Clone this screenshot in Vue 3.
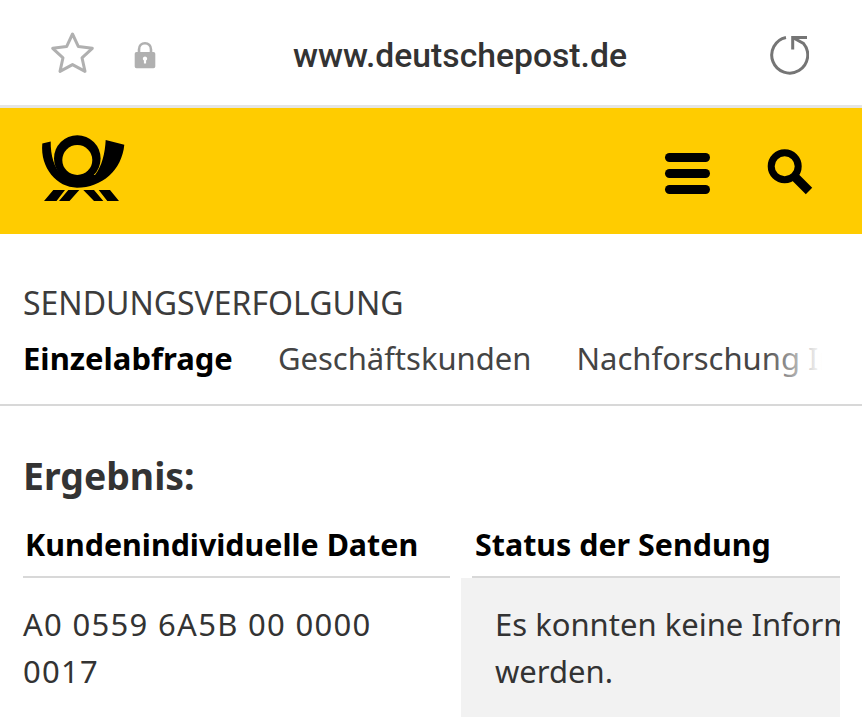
<script setup>
const tabs = ['Einzelabfrage', 'Geschäftskunden', 'Nachforschung Int']
</script>

<template>
  <div class="page">
    <div class="browser-bar">
      <svg class="star" width="48" height="48" viewBox="0 0 48 48">
        <path d="M23.5 5 L29.4 17.6 L43.3 19.3 L33 28.8 L36 42.4 L23.5 35.6 L11 42.4 L14 28.8 L3.7 19.3 L17.6 17.6 Z" fill="none" stroke="#b0b0b0" stroke-width="3" stroke-linejoin="round" />
      </svg>
      <svg class="lock" width="22" height="28" viewBox="0 0 22 28">
        <path d="M5 12 V8.5 C5 4.8 7.6 2.2 11 2.2 C14.4 2.2 17 4.8 17 8.5 V12" fill="none" stroke="#b0b0b0" stroke-width="2.6" />
        <path fill-rule="evenodd" d="M2.5 11 H19.5 A1.8 1.8 0 0 1 21.3 12.8 V25.5 A1.8 1.8 0 0 1 19.5 27.3 H2.5 A1.8 1.8 0 0 1 0.7 25.5 V12.8 A1.8 1.8 0 0 1 2.5 11 Z M11 15.4 A2.2 2.2 0 0 0 9.9 19.5 V22.6 H12.1 V19.5 A2.2 2.2 0 0 0 11 15.4 Z" fill="#b0b0b0" />
      </svg>
      <div class="url">www.deutschepost.de</div>
      <svg class="reload" width="44" height="44" viewBox="0 0 44 44">
        <path d="M21 6.5 A18 18 0 1 0 38.5 12.5 L27.7 6.5" fill="none" stroke="#757575" stroke-width="3" />
        <path d="M42 6.5 H27.7 V18.5" fill="none" stroke="#757575" stroke-width="3" />
      </svg>
    </div>

    <header class="site-header">
      <svg class="logo" width="90" height="70" viewBox="40 133 90 70">
        <path d="M42.3 143.6 L50.7 141.4 C50.5 155 54 168 62 175 L95 175 C102 166 105 153 105.7 140 L124.3 144.7 C122 170 102 187.7 77 187.7 C57 187.7 40 168 42.3 143.6 Z" fill="#000" />
        <circle cx="77.3" cy="158.5" r="23.3" fill="#000" />
        <circle cx="77.3" cy="160" r="15" fill="#fc0" />
        <path d="M53.3 190 H65 L56.5 201 H44 Z M68.3 190 H79.3 L69.5 201 H59 Z M83.3 190 H94 L103.3 201 H94 Z M98.7 190 H110 L119 201 H107.3 Z" fill="#000" />
      </svg>
      <div class="header-actions">
        <div class="menu-icon"><span></span><span></span><span></span></div>
        <svg class="search" width="48" height="48" viewBox="0 0 48 48">
          <circle cx="18.7" cy="17.3" r="13.5" fill="none" stroke="#000" stroke-width="7" />
          <path d="M28.5 27.5 L43 42" fill="none" stroke="#000" stroke-width="9" />
        </svg>
      </div>
    </header>

    <section class="tabs-block">
      <div class="section-title">SENDUNGSVERFOLGUNG</div>
      <nav class="tabs">
        <span v-for="(t, i) in tabs" :key="t" class="tab" :class="{ active: i === 0 }">{{ t }}</span>
        <div class="tabs-fade"></div>
      </nav>
    </section>

    <main class="result">
      <h2>Ergebnis:</h2>
      <div class="result-grid">
        <div class="col-left">
          <div class="col-head">Kundenindividuelle Daten</div>
          <div class="col-body">A0 0559 6A5B 00 0000<br>0017</div>
        </div>
        <div class="col-right">
          <div class="col-head">Status der Sendung</div>
          <div class="status-box">Es konnten keine Informationen angezeigt<br>werden.</div>
        </div>
      </div>
    </main>
  </div>
</template>

<style scoped>
.page {
  width: 862px;
  height: 725px;
  overflow: hidden;
  background: #fff;
  font-family: "Noto Sans", "Open Sans", sans-serif;
  color: #333;
}
.browser-bar {
  height: 105px;
  border-bottom: 3px solid #e5e5e5;
  display: flex;
  align-items: center;
  padding: 0 53px 0 49px;
  box-sizing: content-box;
}
.star {
  flex: none;
}
.lock {
  flex: none;
  margin-left: 37px;
  margin-top: 4px;
}
.url {
  flex: 1;
  font-family: Roboto, sans-serif;
  font-weight: 500;
  font-size: 33.7px;
  color: #333;
  text-align: center;
  padding-right: 1px;
  padding-top: 5px;
}
.reload {
  flex: none;
}
.site-header {
  height: 126px;
  background: #fc0;
  display: flex;
  align-items: center;
  justify-content: space-between;
  padding: 0 48px 0 40px;
}
.logo {
  flex: none;
  margin-top: -6px;
}
.header-actions {
  display: flex;
  align-items: center;
  gap: 56px;
  padding-top: 4px;
}
.menu-icon {
  display: flex;
  flex-direction: column;
  gap: 7px;
  width: 45px;
}
.menu-icon span {
  height: 9px;
  border-radius: 5px;
  background: #000;
}
.tabs-block {
  padding: 51px 0 0 23px;
  border-bottom: 2px solid #d8d8d8;
  height: 119px;
  box-sizing: content-box;
}
.section-title {
  font-size: 32px;
  line-height: 36px;
  color: #3c3c3c;
}
.tabs {
  position: relative;
  display: flex;
  gap: 45px;
  margin-top: 17px;
  font-size: 31px;
  line-height: 40px;
  white-space: nowrap;
  overflow: hidden;
}
.tab {
  color: #444;
}
.tab.active {
  font-weight: 700;
  color: #000;
}
.tabs-fade {
  position: absolute;
  top: 0;
  right: 0;
  bottom: 0;
  width: 100px;
  background: linear-gradient(to right, rgba(255, 255, 255, 0), #fff 60%);
}
.result {
  padding: 0 22px 0 23px;
}
h2 {
  margin: 46px 0 0;
  font-size: 37.4px;
  line-height: 48px;
  font-weight: 700;
  color: #333;
}
.result-grid {
  display: grid;
  grid-template-columns: 427px 368px;
  column-gap: 22px;
  margin-top: 23px;
}
.col-head {
  height: 53px;
  line-height: 43px;
  font-size: 30.4px;
  font-weight: 700;
  color: #000;
  padding-left: 2px;
  border-bottom: 2px solid #d8d8d8;
  box-sizing: content-box;
}
.col-body {
  padding-top: 23px;
  font-size: 31px;
  line-height: 47px;
  letter-spacing: 1.3px;
  color: #333;
}
.col-right {
  min-width: 0;
}
.col-right .col-head {
  padding-left: 3px;
}
.status-box {
  margin-left: -11px;
  height: 139px;
  padding: 23px 0 0 34px;
  box-sizing: border-box;
  background: #f2f2f2;
  font-size: 31px;
  line-height: 47px;
  color: #333;
  white-space: nowrap;
  overflow: hidden;
}
</style>
